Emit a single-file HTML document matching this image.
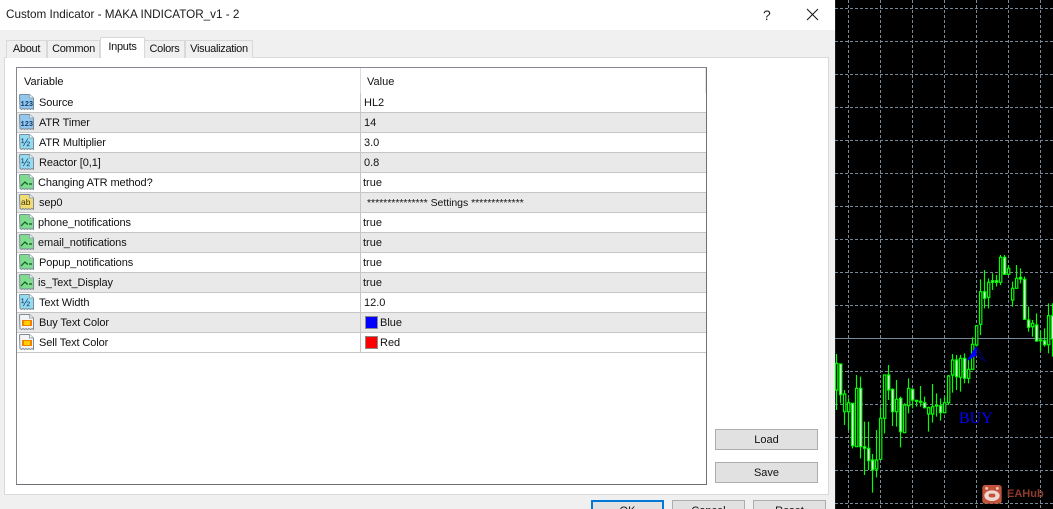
<!DOCTYPE html>
<html><head><meta charset="utf-8"><style>
html,body{margin:0;padding:0;width:1053px;height:509px;overflow:hidden;background:#000}
body{position:relative;font-family:"Liberation Sans",sans-serif;font-size:11px;color:#111}
div{position:absolute;box-sizing:border-box;white-space:nowrap}
#dlg{left:0;top:0;width:835px;height:509px;background:#f0f0f0;overflow:hidden}
#title{left:0;top:0;width:835px;height:30px;background:#fff;font-size:11.7px;line-height:30px;padding-left:6px;color:#1a1a1a}
#panel{left:4px;top:57px;width:825px;height:438px;background:#fff;border:1px solid #d9d9d9}
.tab{top:40px;height:18px;background:#f0f0f0;border:1px solid #d9d9d9;border-bottom:none;line-height:17px;text-align:center;letter-spacing:-.3px}
#box{left:16px;top:67px;width:691px;height:418px;background:#fff;border:1px solid #85898f;border-right-color:#6d7075;border-bottom-color:#6d7075}
.r{left:17px;width:689px;height:20px;border-bottom:1px solid #c6c6c6}
.o{background:#e9e9e9}
.t{top:1px;line-height:19px;letter-spacing:-.1px}
.d{left:343px;top:0;width:1px;height:20px;background:#c6c6c6}
.v{left:347px;top:1px;line-height:19px}
.ic{position:absolute;left:2px;top:1px}
.sw{left:348px;top:3px;width:13px;height:13px;border:1px solid #8a8a8a}
.btn{background:#e1e1e1;border:1px solid #adadad;text-align:center;line-height:20px;color:#111}
.b2{top:500px;width:73px;height:30px;line-height:14px;padding-top:3px}
</style></head><body>
<svg width="0" height="0" style="position:absolute">
<defs>
<symbol id="doc" viewBox="0 0 16 17"><path d="M.5 1.500q0-1 1-1h9l4 3.500v11.500l-1.500-1-1.500 1-1.500-1-1.500 1-1.500-1-1.500 1-1.500-1-1.500 1-1.500-1z" fill="currentColor" stroke="#7c8c98"/><path d="M10.500 .5v3.500h4" fill="#eef6fa" stroke="#9aa6ae"/></symbol>
</defs>
</svg>
<div id="dlg">
<div id="title">Custom Indicator - MAKA INDICATOR_v1 - 2</div>
<div style="left:763px;top:5px;font-size:14px;line-height:20px;color:#222">?</div>
<svg style="position:absolute;left:806px;top:8px" width="13" height="13"><path d="M1 1L12 12M12 1L1 12" stroke="#111" stroke-width="1"/></svg>
<div id="panel"></div>
<div class="tab" style="left:6px;width:41px">About</div>
<div class="tab" style="left:47px;width:53px">Common</div>
<div class="tab" style="left:144px;width:41px">Colors</div>
<div class="tab" style="left:185px;width:68px">Visualization</div>
<div class="tab" style="left:100px;width:45px;top:37px;height:21px;background:#fff;line-height:19px;z-index:2">Inputs</div>
<div id="box"></div>
<div style="left:24px;top:73px;line-height:18px">Variable</div>
<div style="left:367px;top:73px;line-height:18px">Value</div>
<div style="left:360px;top:68px;width:1px;height:25px;background:#dcdcdc"></div>
<div style="left:705px;top:68px;width:1px;height:25px;background:#e5e5e5"></div>

<div class="r" style="top:93px"><svg class="ic" width="16" height="17" style="color:#93c8ee"><use href="#doc"/><text x="1.500" y="12" font-size="7" font-weight="bold" font-family="Liberation Mono" fill="#14386a">123</text></svg><div class="t" style="left:22px">Source</div><div class="d"></div><div class="v">HL2</div></div>
<div class="r o" style="top:113px"><svg class="ic" width="16" height="17" style="color:#93c8ee"><use href="#doc"/><text x="1.500" y="12" font-size="7" font-weight="bold" font-family="Liberation Mono" fill="#14386a">123</text></svg><div class="t" style="left:22px">ATR Timer</div><div class="d"></div><div class="v">14</div></div>
<div class="r" style="top:133px"><svg class="ic" width="16" height="17" style="color:#93dcf0"><use href="#doc"/><text x="2" y="12" font-size="11" font-family="Liberation Sans" fill="#14386a">½</text></svg><div class="t" style="left:22px">ATR Multiplier</div><div class="d"></div><div class="v">3.0</div></div>
<div class="r o" style="top:153px"><svg class="ic" width="16" height="17" style="color:#93dcf0"><use href="#doc"/><text x="2" y="12" font-size="11" font-family="Liberation Sans" fill="#14386a">½</text></svg><div class="t" style="left:22px">Reactor [0,1]</div><div class="d"></div><div class="v">0.8</div></div>
<div class="r" style="top:173px"><svg class="ic" width="16" height="17" style="color:#7fdc8f"><use href="#doc"/><path d="M2 12l4-4 2 2h1M10 10h3" fill="none" stroke="#0a5a1a" stroke-width="1.200"/></svg><div class="t" style="left:21px">Changing ATR method?</div><div class="d"></div><div class="v" style="left:346px">true</div></div>
<div class="r o" style="top:193px"><svg class="ic" width="16" height="17" style="color:#f0dc72"><use href="#doc"/><text x="2" y="11" font-size="8.500" font-family="Liberation Sans" fill="#3a3000">ab</text></svg><div class="t" style="left:22px">sep0</div><div class="d"></div><div class="v" style="left:350px;letter-spacing:-.04px;font-size:10.500px">*************** Settings *************</div></div>
<div class="r" style="top:213px"><svg class="ic" width="16" height="17" style="color:#7fdc8f"><use href="#doc"/><path d="M2 12l4-4 2 2h1M10 10h3" fill="none" stroke="#0a5a1a" stroke-width="1.200"/></svg><div class="t" style="left:21px">phone_notifications</div><div class="d"></div><div class="v" style="left:346px">true</div></div>
<div class="r o" style="top:233px"><svg class="ic" width="16" height="17" style="color:#7fdc8f"><use href="#doc"/><path d="M2 12l4-4 2 2h1M10 10h3" fill="none" stroke="#0a5a1a" stroke-width="1.200"/></svg><div class="t" style="left:21px">email_notifications</div><div class="d"></div><div class="v" style="left:346px">true</div></div>
<div class="r" style="top:253px"><svg class="ic" width="16" height="17" style="color:#7fdc8f"><use href="#doc"/><path d="M2 12l4-4 2 2h1M10 10h3" fill="none" stroke="#0a5a1a" stroke-width="1.200"/></svg><div class="t" style="left:22px">Popup_notifications</div><div class="d"></div><div class="v" style="left:346px">true</div></div>
<div class="r o" style="top:273px"><svg class="ic" width="16" height="17" style="color:#7fdc8f"><use href="#doc"/><path d="M2 12l4-4 2 2h1M10 10h3" fill="none" stroke="#0a5a1a" stroke-width="1.200"/></svg><div class="t" style="left:21px">is_Text_Display</div><div class="d"></div><div class="v" style="left:346px">true</div></div>
<div class="r" style="top:293px"><svg class="ic" width="16" height="17" style="color:#93dcf0"><use href="#doc"/><text x="2" y="12" font-size="11" font-family="Liberation Sans" fill="#14386a">½</text></svg><div class="t" style="left:22px">Text Width</div><div class="d"></div><div class="v">12.0</div></div>
<div class="r o" style="top:313px"><svg class="ic" width="16" height="17" style="color:#f4f4f4"><use href="#doc"/><rect x="3" y="6" width="10" height="6" fill="#f08000"/><rect x="5" y="7" width="6" height="4" fill="#ffd000"/></svg><div class="t" style="left:22px">Buy Text Color</div><div class="d"></div><div class="sw" style="background:#00f"></div><div class="v" style="left:363px">Blue</div></div>
<div class="r" style="top:333px"><svg class="ic" width="16" height="17" style="color:#f4f4f4"><use href="#doc"/><rect x="3" y="6" width="10" height="6" fill="#f08000"/><rect x="5" y="7" width="6" height="4" fill="#ffd000"/></svg><div class="t" style="left:22px">Sell Text Color</div><div class="d"></div><div class="sw" style="background:#f00"></div><div class="v" style="left:363px">Red</div></div>

<div class="btn" style="left:715px;top:429px;width:103px;height:21px">Load</div>
<div class="btn" style="left:715px;top:462px;width:103px;height:21px">Save</div>
<div class="btn b2" style="left:591px;border:2px solid #0078d7;padding-top:2px">OK</div>
<div class="btn b2" style="left:672px">Cancel</div>
<div class="btn b2" style="left:753px">Reset</div>
</div>

<svg style="position:absolute;left:835px;top:0" width="218" height="509" shape-rendering="crispEdges">
<rect x="0" y="0" width="1" height="509" fill="#1c1c1c"/>
<g stroke="#778899" stroke-width="1" stroke-dasharray="3 2" fill="none">
<path d="M13.500 0V509M45.500 0V509M77.500 0V509M109.500 0V509M141.500 0V509M173.500 0V509M205.500 0V509"/>
<path d="M0 8.500H218M0 41.500H218M0 74.500H218M0 107.500H218M0 140.500H218M0 173.500H218M0 206.500H218M0 239.500H218M0 272.500H218M0 305.500H218M0 371.500H218M0 404.500H218M0 437.500H218M0 470.500H218M0 503.500H218"/>
</g>
<rect x="0" y="338" width="218" height="1" fill="#778899"/>
</svg>
<svg style="position:absolute;left:835px;top:240px" width="218" height="269" viewBox="0 0 654 807">
<path stroke="#00ff00" stroke-width="3.500" fill="none" d="M4.500 342V510M16.500 372V490M28.500 450V555M40.500 475V570M52.500 490V625M64.500 405V620M76.500 410V655M88.500 545V705M100.500 545V690M112.500 642V758M124.500 570V712M136.500 503V660M148.500 405V580M160.500 375V480M172.500 445V558M184.500 420V560M196.500 470V622M208.500 490V578M220.500 415V520M232.500 445V505M244.500 480V500M256.500 438V500M268.500 470V505M280.500 500V575M292.500 432V548M304.500 460V530M316.500 475V542M328.500 470V520M340.500 405V495M352.500 342V458M364.500 345V450M376.500 345V455M388.500 340V430M400.500 360V430M412.500 292V390M424.500 255V320M436.500 118V285M448.500 90V205M460.500 115V205M472.500 100V150M484.500 105V140M496.500 45V135M508.500 45V105M520.500 75V105M532.500 125V200M544.500 75V145M556.500 85V130M568.500 110V240M580.500 200V275M592.500 240V290M604.500 220V305M616.500 272V335M628.500 265V320M640.500 190V340M652.500 190V350"/>
<path stroke="#00ff00" stroke-width="3.500" fill="#000" d="M1.500 370h7v80h-7zM25.500 462h7v53h-7zM37.500 488h7v27h-7zM61.500 445h7v175h-7zM121.500 660h7v27h-7zM133.500 535h7v123h-7zM145.500 405h7v130h-7zM181.500 478h7v37h-7zM205.500 495h7v83h-7zM217.500 445h7v52h-7zM277.500 503h7v19h-7zM289.500 500h7v22h-7zM325.500 488h7v30h-7zM337.500 408h7v80h-7zM349.500 360h7v45h-7zM373.500 355h7v57h-7zM397.500 388h7v27h-7zM409.500 313h7v75h-7zM421.500 257h7v58h-7zM433.500 155h7v98h-7zM457.500 127h7v45h-7zM493.500 52h7v75h-7zM517.500 85h7v18h-7zM529.500 145h7v35h-7zM541.500 115h7v30h-7zM589.500 250h7v10h-7zM637.500 227h7v87h-7z"/>
<path stroke="#00ff00" stroke-width="3.500" fill="#fff" d="M13.500 372h7v92h-7zM49.500 490h7v127h-7zM73.500 445h7v175h-7zM85.500 620h7v5h-7zM97.500 625h7v37h-7zM109.500 660h7v30h-7zM157.500 405h7v45h-7zM169.500 448h7v67h-7zM193.500 475h7v100h-7zM229.500 448h7v32h-7zM241.500 481h7v3h-7zM253.500 484h7v3h-7zM265.500 488h7v15h-7zM301.500 496h7v2h-7zM313.500 497h7v21h-7zM361.500 360h7v50h-7zM385.500 355h7v60h-7zM445.500 155h7v20h-7zM469.500 122h7v5h-7zM481.500 122h7v5h-7zM505.500 52h7v51h-7zM553.500 112h7v5h-7zM565.500 118h7v120h-7zM577.500 240h7v22h-7zM601.500 255h7v48h-7zM613.500 300h7v2h-7zM625.500 302h7v12h-7zM649.500 227h7v70h-7z"/>
<path d="M424 320L396 362L424 345z" fill="#0000ff" stroke="#0000ff" stroke-width="2"/>
<path d="M424 320L452 365L424 345z" fill="none" stroke="#0000c0" stroke-width="2.500" stroke-dasharray="4 2"/>
<rect x="442" y="735" width="58" height="56" rx="8" fill="#c4533c"/>
<ellipse cx="471" cy="767" rx="23" ry="16" fill="#f0d8d0"/>
<circle cx="455" cy="745" r="4" fill="#f0d8d0"/><circle cx="487" cy="745" r="4" fill="#f0d8d0"/>
<rect x="461" y="761" width="20" height="11" rx="5" fill="#c4533c"/>
</svg>
<div style="left:959px;top:409px;font-family:'Liberation Serif',serif;font-size:16px;line-height:19px;color:#0000ff">BUY</div>
<div style="left:1007px;top:487px;font-family:'Liberation Sans',sans-serif;font-weight:bold;font-size:11px;line-height:14px;color:#8f3a2c">EAHub</div>
</body></html>
